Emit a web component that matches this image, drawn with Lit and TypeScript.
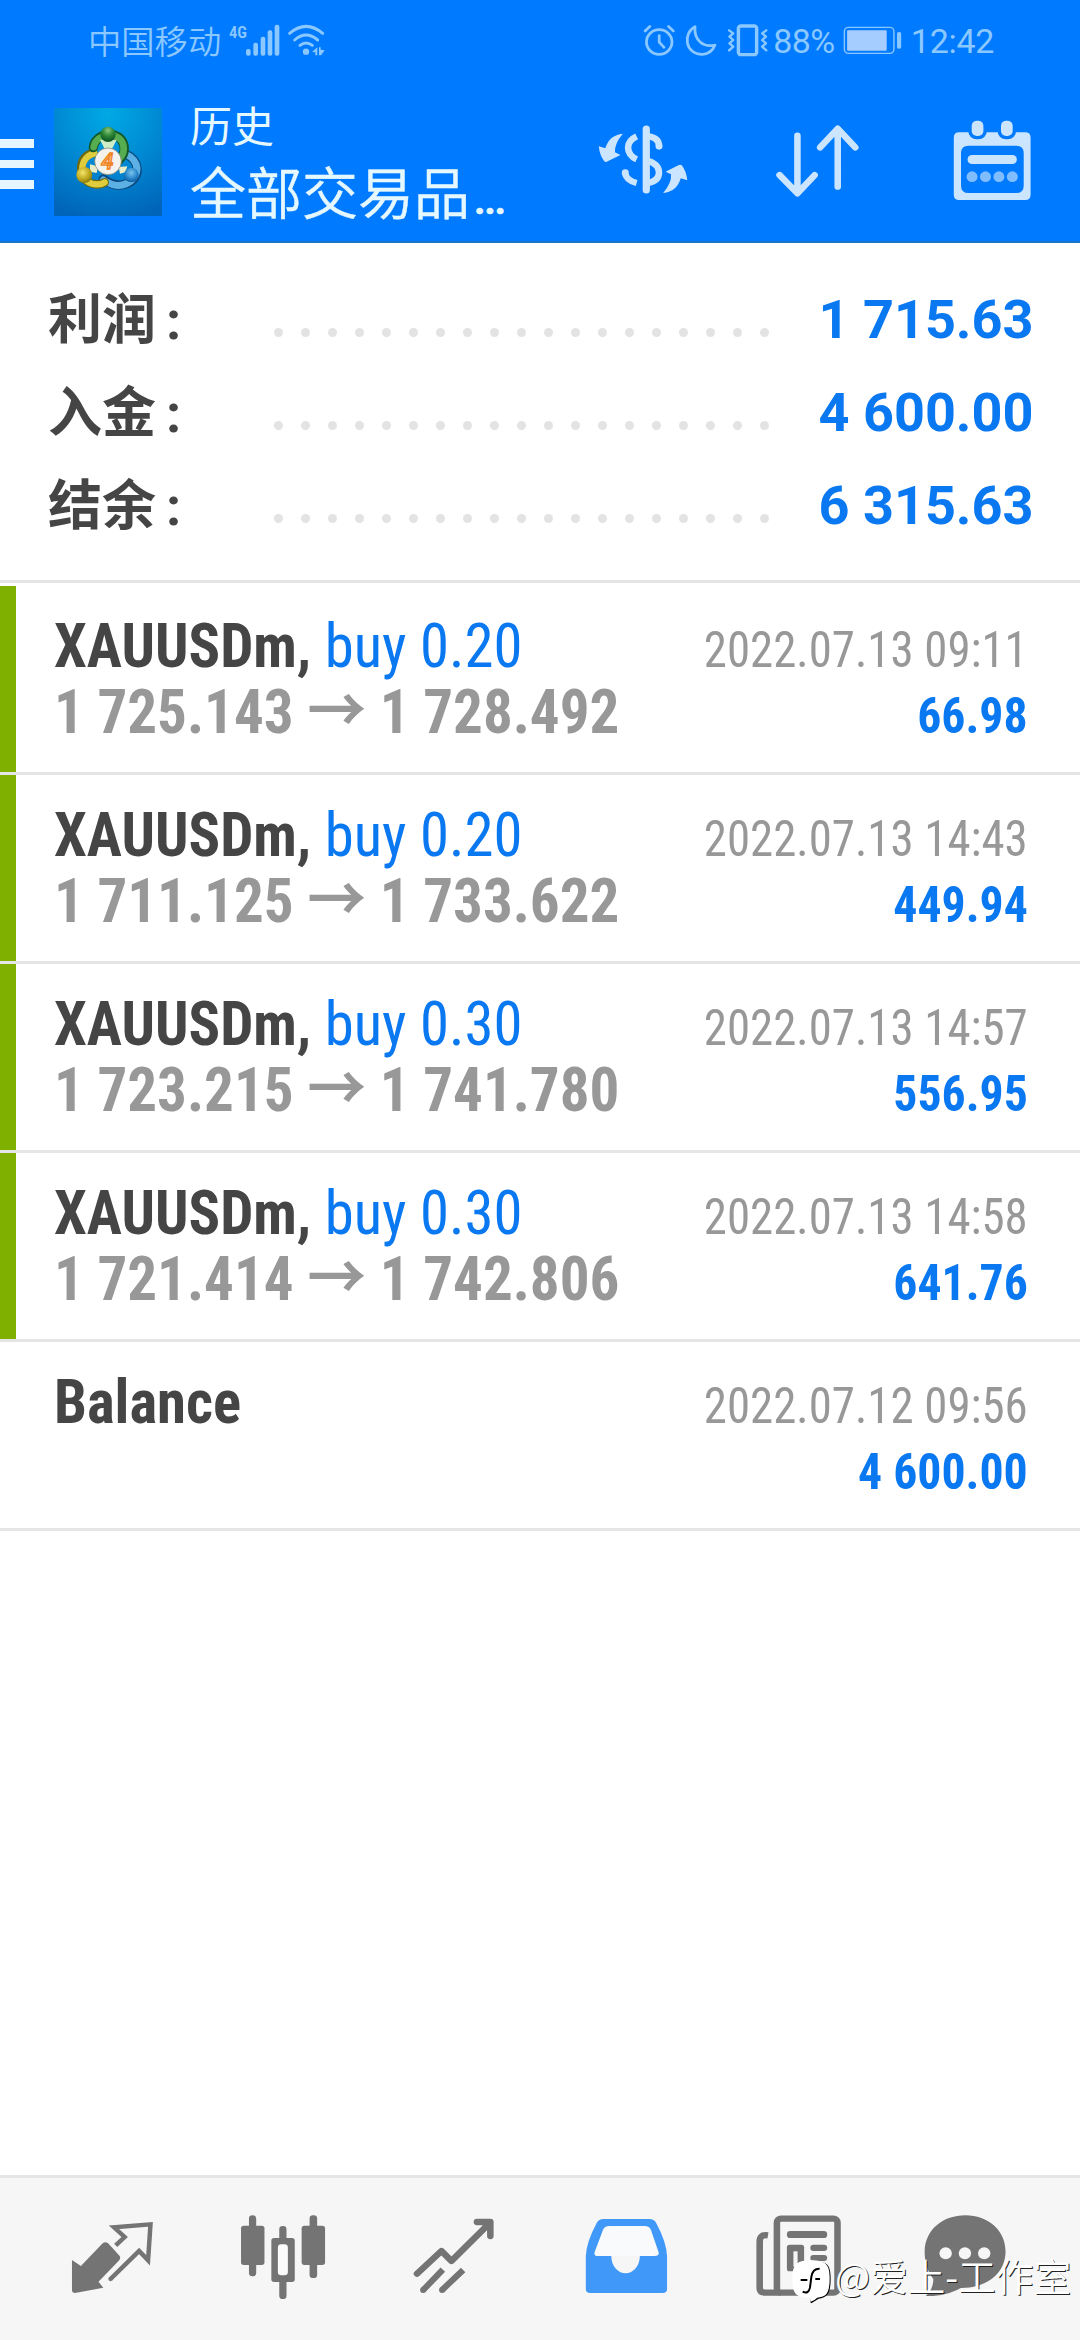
import { LitElement, html, css, svg, nothing } from "lit";
import { customElement, property } from "lit/decorators.js";

interface Deal {
  name: string;
  volume?: string;
  open?: string;
  close?: string;
  time: string;
  profit: string;
}

const TOTALS = [
  { label: "利润", value: "1 715.63" },
  { label: "入金", value: "4 600.00" },
  { label: "结余", value: "6 315.63" },
];

const DEALS: Deal[] = [
  { name: "XAUUSDm,", volume: "buy 0.20", open: "1 725.143", close: "1 728.492", time: "2022.07.13 09:11", profit: "66.98" },
  { name: "XAUUSDm,", volume: "buy 0.20", open: "1 711.125", close: "1 733.622", time: "2022.07.13 14:43", profit: "449.94" },
  { name: "XAUUSDm,", volume: "buy 0.30", open: "1 723.215", close: "1 741.780", time: "2022.07.13 14:57", profit: "556.95" },
  { name: "XAUUSDm,", volume: "buy 0.30", open: "1 721.414", close: "1 742.806", time: "2022.07.13 14:58", profit: "641.76" },
  { name: "Balance", time: "2022.07.12 09:56", profit: "4 600.00" },
];

@customElement("status-bar")
export class StatusBar extends LitElement {
  static styles = css`
    :host { display: flex; height: 84px; padding: 0 86px 0 88px; box-sizing: border-box; color: #8ac8ff; font-size: 34px; font-weight: 400; line-height: 82px; white-space: nowrap; }
    svg { display: block; flex: none; }
    .carrier { width: 138.7px; font-size: 33.3px; line-height: 85px; font-weight: 350; }
    .signal { width: 100px; height: 40px; margin-top: 20px; }
    .modes { width: 127.4px; height: 36.7px; margin: 21.7px 4px 0 auto; }
    .percent { width: 70px; letter-spacing: -0.6px; }
    .battery { width: 59.2px; height: 30.7px; margin-top: 25px; }
    .clock { width: 91.5px; text-align: right; letter-spacing: -0.3px; }
    .net { font-size: 51px; font-weight: 600; font-stretch: 75%; }
  `;
  render() {
    return html`
      <span class="carrier">中国移动</span>
      <svg class="signal" viewBox="440 30 300 120" fill="currentColor">
        <text class="net" x="446" y="83" textLength="54" lengthAdjust="spacingAndGlyphs">4G</text>
        <rect x="497" y="117" width="14" height="20" rx="6" />
        <rect x="519" y="98" width="14" height="39" rx="6" />
        <rect x="541" y="80" width="14" height="57" rx="6" />
        <rect x="562" y="61" width="14" height="76" rx="6" />
        <rect x="583" y="44" width="14" height="93" rx="6" />
        <g fill="none" stroke="currentColor" stroke-width="9" stroke-linecap="round">
          <path d="M628 70Q677 28 727 70" />
          <path d="M643 90Q677 60 712 90" />
          <path d="M659 106Q677 92 696 106" />
        </g>
        <circle cx="677" cy="125" r="9.5" />
        <path d="M695 126L711 112V136H705V127ZM716 136V112H721V119L733 121L722 136Z" />
      </svg>
      <svg class="modes" viewBox="290 65 370 110" preserveAspectRatio="none" fill="none" stroke="currentColor" stroke-width="8" stroke-linecap="round" stroke-linejoin="round">
        <circle cx="340" cy="125" r="37" />
        <path d="M340 106V125L354 141M299 92L313 78M367 78L381 92" />
        <path d="M444 79C408 98 414 163 466 162C485 160 496 150 502 134C470 142 440 122 444 79Z" />
        <rect x="570" y="77" width="53" height="86" rx="7" stroke-width="10" />
        <path stroke-width="7" d="M543 90L555 99L544 109L555 119L544 129L555 139L543 150M651 90L639 99L650 109L639 119L650 129L639 139L651 150" />
      </svg>
      <span class="percent">88%</span>
      <svg class="battery" viewBox="878 75 172 92" preserveAspectRatio="none">
        <rect x="882" y="82" width="144" height="78" rx="12" fill="none" stroke="#8ac8ff" stroke-width="4" />
        <rect x="890" y="91" width="115" height="61" rx="3" fill="#a6cdff" />
        <rect x="1035" y="96" width="12" height="50" rx="5" fill="#8ac8ff" />
      </svg>
      <span class="clock">12:42</span>
    `;
  }
}

@customElement("title-bar")
export class TitleBar extends LitElement {
  static styles = css`
    :host { display: flex; height: 159px; box-sizing: border-box; padding-right: 45.2px; border-bottom: 2px solid #1b74c4; color: #e6f8ff; }
    svg { display: block; flex: none; }
    .menu { display: flex; flex-direction: column; gap: 12px; width: 34px; padding-top: 55px; }
    .menu i { height: 8.5px; background: #e6f6ff; }
    .logo { width: 108px; height: 108px; margin: 24px 28px 0 20px; }
    .titles { flex: 1; padding-top: 11px; white-space: nowrap; }
    .top { font-size: 42px; line-height: 65px; font-weight: 400; }
    .sub { font-size: 56px; line-height: 71px; font-weight: 350; -webkit-text-stroke: 0.5px currentColor; }
    .dots { font-size: 40px; font-weight: 700; margin-left: 4px; letter-spacing: -1.3px; }
    .currency { width: 93px; height: 73.3px; margin-top: 39.3px; }
    .sort { width: 89.5px; height: 76.7px; margin: 39.3px 87.9px 0 84.3px; }
    .calendar { width: 84.4px; height: 85px; margin-top: 34.3px; }
    .four { font-size: 66px; font-weight: 500; font-style: italic; }
  `;
  render() {
    return html`
      <div class="menu"><i></i><i></i><i></i></div>
      <svg class="logo" viewBox="42 39 324 324">
        <defs>
          <radialGradient id="sky" cx=".5" cy=".05" r="1"><stop offset="0" stop-color="#00a9e4" /><stop offset=".5" stop-color="#0088d2" /><stop offset="1" stop-color="#0064b8" /></radialGradient>
          <radialGradient id="g" cx=".5" cy=".25" r=".7"><stop offset="0" stop-color="#8fc87e" /><stop offset=".5" stop-color="#2f8a37" /><stop offset="1" stop-color="#0f5426" /></radialGradient>
          <radialGradient id="y" cx=".4" cy=".35" r=".7"><stop offset="0" stop-color="#f2e56a" /><stop offset=".6" stop-color="#bfa71c" /><stop offset="1" stop-color="#7f7410" /></radialGradient>
          <radialGradient id="b" cx=".5" cy=".35" r=".7"><stop offset="0" stop-color="#7cc4ee" /><stop offset=".6" stop-color="#2583c8" /><stop offset="1" stop-color="#0b528f" /></radialGradient>
        </defs>
        <rect x="42" y="39" width="324" height="324" fill="url(#sky)" />
        <g fill="none" stroke-linecap="round">
          <path d="M190 252C240 290 296 262 291 220C289 200 276 186 258 178" stroke="#0a4a80" stroke-width="28" />
          <path d="M190 255C240 290 290 262 291 220C289 200 276 186 258 178" stroke="#5db0e4" stroke-width="21" />
          <path d="M160 174C132 180 118 205 126 236M140 258C160 272 182 270 194 262" stroke="#6f6a12" stroke-width="26" />
          <path d="M163 175C136 182 122 206 128 236M140 258C160 272 182 270 194 262" stroke="#dfcc3c" stroke-width="19" />
          <path d="M160 158C164 112 240 100 252 152C256 176 246 186 236 196" stroke="#14592a" stroke-width="28" />
          <path d="M161 156C168 114 238 106 250 150C254 174 246 184 236 194" stroke="#55ad50" stroke-width="20" />
        </g>
        <path d="M180 134H230L214 166H196Z" fill="#cfeec8" />
        <path d="M150 208L174 214L170 234L150 230ZM236 216L262 214L256 232L240 236Z" fill="#e9eec8" />
        <circle cx="204" cy="118" r="23" fill="url(#g)" />
        <circle cx="133" cy="240" r="24" fill="url(#y)" />
        <circle cx="274" cy="240" r="22" fill="url(#b)" />
        <circle cx="204" cy="199" r="40" fill="#f4f2ec" stroke="#777768" stroke-width="2" />
        <text class="four" x="202" y="223" text-anchor="middle" fill="#ffc58a" stroke="#f08322" stroke-width="4">4</text>
      </svg>
      <div class="titles">
        <div class="top">历史</div>
        <div class="sub">全部交易品<span class="dots">...</span></div>
      </div>
      <svg class="currency" viewBox="160 370 270 220" preserveAspectRatio="none" fill="none" stroke="#cce5ff" stroke-width="19">
        <path stroke-linecap="round" d="M306 388V571" stroke-width="21" />
        <path d="M312 410Q342 414 343 438" />
        <circle cx="343" cy="440" r="10" fill="#cce5ff" stroke="none" />
        <path d="M312 484Q343 494 343 520Q342 544 312 550" />
        <path d="M278 410Q253 422 253 444Q254 468 278 479M244 519Q247 542 278 550" />
        <circle cx="245" cy="519" r="10" fill="#cce5ff" stroke="none" />
        <g fill="#cce5ff" stroke="none">
          <path d="M238 402Q198 406 187 446L168 440Q171 468 184 485Q188 489 194 485L231 466L215 458Q213 432 238 402Z" />
          <path transform="rotate(180 296.5 491)" d="M238 402Q198 406 187 446L168 440Q171 468 184 485Q188 489 194 485L231 466L215 458Q213 432 238 402Z" />
        </g>
      </svg>
      <svg class="sort" viewBox="675 370 260 230" preserveAspectRatio="none" fill="none" stroke="#cce5ff" stroke-width="19" stroke-linecap="round" stroke-linejoin="round">
        <path d="M746 408V578M694 526L746 581L796 526M863 561V390M812 443L863 387L914 443" />
      </svg>
      <svg class="calendar" viewBox="1190 355 245 255" preserveAspectRatio="none" fill="#cce5ff">
        <path fill-rule="evenodd" d="M1217 398H1408Q1424 398 1424 414V585Q1424 601 1408 601H1217Q1201 601 1201 585V414Q1201 398 1217 398ZM1244 438Q1222 438 1222 460V558Q1222 580 1244 580H1382Q1404 580 1404 558V460Q1404 438 1382 438Z" />
        <g stroke="#007aff" paint-order="stroke">
          <rect x="1253" y="363" width="34" height="46" rx="15" stroke-width="20" />
          <rect x="1338" y="363" width="34" height="46" rx="15" stroke-width="20" />
        </g>
        <rect x="1241" y="466" width="143" height="27" rx="13" />
        <g fill="#80bdff">
          <circle cx="1254" cy="531" r="16" /><circle cx="1293" cy="531" r="16" /><circle cx="1332" cy="531" r="16" /><circle cx="1371" cy="531" r="16" />
        </g>
      </svg>
    `;
  }
}

@customElement("account-totals")
export class AccountTotals extends LitElement {
  static styles = css`
    :host { display: block; height: 340px; box-sizing: border-box; padding: 30px 46.5px 0 48px; border-bottom: 3px solid #e5e5e5; }
    .row { display: flex; align-items: center; height: 93px; line-height: 93px; font-size: 54px; font-weight: 700; white-space: nowrap; }
    .label { display: flex; gap: 10px; width: 226px; padding-top: 1px; color: #454545; }
    .leader { display: flex; gap: 18px; padding-top: 25px; }
    .leader i { width: 9px; height: 9px; border-radius: 50%; background: #e3e3e3; }
    .value { margin-left: auto; color: #0a78f0; }
  `;
  render() {
    return html`${TOTALS.map(
      (t) => html`<div class="row">
        <span class="label"><span>${t.label}</span><span>:</span></span>
        <span class="leader">${Array.from({ length: 19 }, () => html`<i></i>`)}</span>
        <span class="value">${t.value}</span>
      </div>`
    )}`;
  }
}

@customElement("deal-row")
export class DealRow extends LitElement {
  @property({ attribute: false }) deal!: Deal;
  static styles = css`
    :host { display: block; }
    .box { display: flex; border-bottom: 3px solid #e5e5e5; }
    .mark { width: 15.5px; height: 186px; }
    .closed .mark { background: #7fb000; }
    .body { flex: 1; height: 186px; box-sizing: border-box; padding: 27px 52px 0 38.5px; font-stretch: 75%; }
    .line { display: flex; justify-content: space-between; align-items: baseline; height: 66px; line-height: 66px; white-space: nowrap; }
    .left { font-size: 62px; font-weight: 700; color: #454545; transform: scaleX(0.947); transform-origin: left; }
    .volume { font-weight: 400; color: #0a78f0; }
    .prices { color: #989898; transform: scaleX(0.952); }
    .right { margin-left: auto; font-size: 50px; color: #989898; transform: scaleX(0.937); transform-origin: right; }
    .profit { font-weight: 700; color: #0a78f0; transform: scaleX(0.955); }
  `;
  render() {
    const d = this.deal;
    return html`<div class="box ${d.volume ? "closed" : ""}">
      <div class="mark"></div>
      <div class="body">
        <div class="line">
          <span class="left">${d.name} ${d.volume ? html`<span class="volume">${d.volume}</span>` : nothing}</span>
          <span class="right">${d.time}</span>
        </div>
        <div class="line">
          <span class="left prices">${d.open ? `${d.open} → ${d.close}` : "\u00a0"}</span>
          <span class="right profit">${d.profit}</span>
        </div>
      </div>
    </div>`;
  }
}

const NAV = [
  { box: "78.4 54 496.6 486", art: svg`
    <path d="M209 300L235 318L296 252Q304 243 314 250L345 285Q353 293 345 302L286 365L300 383L218 399Q209 399 209 390Z" fill="#747474"/>
    <path d="M336 256L362 231L331 202L437 193L430 301L404 273L321 357" fill="none" stroke="#747474" stroke-width="13"/><circle cx="321" cy="357" r="6.5" fill="#747474"/>` },
  { box: "575 54 496.6 486", art: svg`<g fill="#747474">
    <rect x="700" y="197" width="68" height="118" rx="8"/><rect x="723" y="166" width="21" height="183" rx="10"/>
    <rect x="876" y="197" width="68" height="118" rx="8"/><rect x="899" y="166" width="22" height="188" rx="10"/>
    <rect x="788" y="234" width="68" height="132" rx="8"/><rect x="811" y="198" width="21" height="219" rx="10"/></g>
    <rect x="807" y="253" width="29" height="93" rx="10" fill="#fbfbfb"/>` },
  { box: "1071.6 54 496.6 486", art: svg`<g fill="none" stroke="#747474" stroke-width="19" stroke-linecap="round" stroke-linejoin="round">
    <path d="M1211 341L1282 273L1311 303L1420 191M1385 186H1424V228"/></g>
    <path d="M1229 390L1286 329M1284 390L1345 330" fill="none" stroke="#747474" stroke-width="18"/>
    <circle cx="1229" cy="390" r="9" fill="#747474"/><circle cx="1284" cy="390" r="9" fill="#747474"/>` },
  { box: "0 54 496.6 486", art: svg`
    <path d="M158 288L184 200H320L345 288Z" fill="#f9fafb"/>
    <path fill="#4099f8" fill-rule="evenodd" d="M133 288Q135 245 165 188Q171 177 184 177H318Q331 177 337 188Q367 245 369 288V386Q369 399 356 399H146Q133 399 133 386ZM207 288A41 51 0 0 0 290 288H333Q348 288 344 275L322 209Q317 198 305 198H200Q188 198 183 209L159 275Q155 288 168 288Z"/>` },
  { box: "496.6 54 496.6 486", art: svg`
    <path d="M662 226Q638 222 638 245V385Q638 398 655 398H700" fill="none" stroke="#747474" stroke-width="19"/>
    <rect x="688" y="176" width="176" height="222" rx="12" fill="#f6f6f6" stroke="#747474" stroke-width="19"/>
    <g fill="#747474"><rect x="717" y="213" width="117" height="21" rx="10"/><rect x="717" y="254" width="50" height="80" rx="8"/>
    <rect x="785" y="254" width="49" height="19" rx="9"/><rect x="785" y="285" width="49" height="18" rx="9"/><rect x="785" y="316" width="49" height="18" rx="9"/></g>
    <rect x="736" y="274" width="12" height="46" fill="#f6f6f6"/>` },
  { box: "993.2 54 496.6 486", art: svg`
    <path d="M1117 274C1119 207 1172 166 1235 166C1302 166 1352 212 1352 274C1352 340 1298 385 1222 384C1190 402 1155 410 1120 408C1136 394 1143 374 1142 356C1125 336 1117 306 1117 274Z" fill="#747474"/>
    <g fill="#f6f6f6"><circle cx="1178" cy="280" r="18"/><circle cx="1234" cy="280" r="18"/><circle cx="1290" cy="280" r="18"/></g>` },
];

@customElement("bottom-nav")
export class BottomNav extends LitElement {
  static styles = css`
    :host { display: grid; grid-template-columns: repeat(6, 171px); height: 165px; box-sizing: border-box; padding: 0 27px; border-top: 3px solid #e5e5e5; background: #f6f6f6; }
    svg { display: block; width: 171px; height: 162px; }
  `;
  render() {
    return html`${NAV.map((n) => html`<svg viewBox=${n.box} preserveAspectRatio="none">${n.art}</svg>`)}`;
  }
}

@customElement("user-mark")
export class UserMark extends LitElement {
  static styles = css`
    :host { position: absolute; right: 9px; top: 2248px; display: flex; height: 60px; line-height: 54px; color: #fff; font-size: 37.6px; font-weight: 350; white-space: nowrap; font-family: "Noto Sans CJK SC", sans-serif; text-shadow: 1px 1px 0.5px #222; }
    svg { display: block; width: 43.3px; height: 46.7px; margin: 10px 2px 0 0; }
  `;
  render() {
    return html`
      <svg viewBox="110 175 130 140">
        <path d="M204 186C226 190 233 206 232 242C231 282 222 294 196 297L174 311L170 306Z" fill="#000" />
        <path d="M173 182C219 182 230 196 229 240C228 282 218 292 192 294Q184 302 171 307V295C128 294 117 282 117 240C117 196 128 182 173 182Z" fill="#fff" />
        <path d="M199 207Q178 206 174 232L170 264Q166 284 148 276M142 241H162M186 238H200" fill="none" stroke="#000" stroke-width="6" />
      </svg>
      <span>@爱上-工作室</span>
    `;
  }
}

@customElement("app-root")
export class AppRoot extends LitElement {
  static styles = css`
    :host { position: relative; display: flex; flex-direction: column; width: 1080px; height: 2340px; overflow: hidden; background: #fff; font-family: Roboto, "Noto Sans CJK SC", sans-serif; }
    .head { background: #007aff; }
    .deals { flex: 1; padding-top: 3px; }
  `;
  render() {
    return html`
      <header class="head"><status-bar></status-bar><title-bar></title-bar></header>
      <account-totals></account-totals>
      <main class="deals">${DEALS.map((d) => html`<deal-row .deal=${d}></deal-row>`)}</main>
      <bottom-nav></bottom-nav>
      <user-mark></user-mark>
    `;
  }
}
